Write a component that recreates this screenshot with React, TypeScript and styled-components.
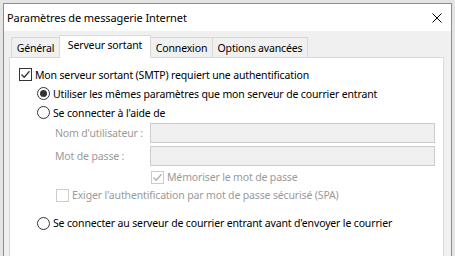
import React from "react";
import styled, { createGlobalStyle } from "styled-components";

const Global = createGlobalStyle`
  html, body { margin: 0; padding: 0; background: #e4e4e4; overflow: hidden; }
  body { width: 455px; height: 256px; font-family: "Noto Sans", "Segoe UI", sans-serif; }
  #root { height: 256px; }
`;

const Screen = styled.div`
  position: relative;
  height: 256px;
  padding: 3px 0 0 3px;
  box-sizing: border-box;
  overflow: hidden;
`;

const Dialog = styled.div`
  width: 449px;
  height: 270px;
  box-sizing: border-box;
  border: 1px solid #8d8d8d;
  background: #f0f0f0;
  display: flex;
  flex-direction: column;
`;

const TitleBar = styled.div`
  height: 27px;
  flex: none;
  background: #ffffff;
  display: flex;
  align-items: center;
  justify-content: space-between;
  padding: 0 9px 0 3px;
  font-size: 11px;
  letter-spacing: -0.1px;
  color: #000;
`;

const CloseIcon = styled.svg`
  width: 10px;
  height: 10px;
  display: block;
`;

const Body = styled.div`
  flex: 1;
  padding: 4px 7px 0 5px;
  display: flex;
  flex-direction: column;
  font-size: 10.5px;
  letter-spacing: -0.15px;
`;

const TabRow = styled.div`
  display: flex;
  align-items: flex-end;
  height: 23px;
  padding-left: 2px;
  margin-bottom: -1px;
  position: relative;
  z-index: 1;
`;

const Tab = styled.div<{ $w: number; $active?: boolean }>`
  width: ${(p) => p.$w}px;
  box-sizing: border-box;
  height: ${(p) => (p.$active ? 23 : 21)}px;
  margin-left: -1px;
  &:first-child { margin-left: 0; }
  border: 1px solid #d9d9d9;
  border-bottom: ${(p) => (p.$active ? "none" : "1px solid #d9d9d9")};
  background: ${(p) => (p.$active ? "#ffffff" : "#f0f0f0")};
  position: relative;
  z-index: ${(p) => (p.$active ? 2 : 1)};
  display: flex;
  align-items: ${(p) => (p.$active ? "flex-start" : "center")};
  justify-content: center;
  padding-top: ${(p) => (p.$active ? "2px" : "0")};
  color: #000;
  white-space: nowrap;
`;

const Panel = styled.div`
  width: 435px;
  flex: 1;
  box-sizing: border-box;
  background: #ffffff;
  border: 1px solid #d9d9d9;
  padding: 7px 0 0 9px;
  display: flex;
  flex-direction: column;
`;

const Row = styled.div<{ $indent?: number; $h?: number; $mt?: number }>`
  display: flex;
  align-items: center;
  gap: 3px;
  height: ${(p) => p.$h ?? 19}px;
  margin-left: ${(p) => p.$indent ?? 0}px;
  margin-top: ${(p) => p.$mt ?? 0}px;
  white-space: nowrap;
`;

const Label = styled.span<{ $disabled?: boolean }>`
  color: ${(p) => (p.$disabled ? "#9a9a9a" : "#000000")};
  white-space: nowrap;
`;

const Box = styled.span<{ $disabled?: boolean }>`
  width: 13px;
  height: 13px;
  box-sizing: border-box;
  flex: none;
  border: 1px solid ${(p) => (p.$disabled ? "#cccccc" : "#333333")};
  background: #ffffff;
  display: flex;
  align-items: center;
  justify-content: center;
`;

const Radio = styled.span<{ $checked?: boolean }>`
  width: 13px;
  height: 13px;
  box-sizing: border-box;
  flex: none;
  border: 1px solid #333333;
  border-radius: 50%;
  background: #ffffff;
  display: flex;
  align-items: center;
  justify-content: center;
  &::after {
    content: "";
    display: ${(p) => (p.$checked ? "block" : "none")};
    width: 7px;
    height: 7px;
    border-radius: 50%;
    background: #333333;
  }
`;

const Fields = styled.div`
  display: grid;
  grid-template-columns: 95px 285px;
  row-gap: 3px;
  margin-left: 36px;
  margin-top: 1px;
  align-items: center;
`;

const Input = styled.div`
  height: 20px;
  box-sizing: border-box;
  border: 1px solid #cccccc;
  background: #f0f0f0;
`;

const Check = ({ color }: { color: string }) => (
  <svg width="11" height="11" viewBox="0 0 11 11">
    <path d="M1.5 5.5 L4.2 8.3 L9.5 2.2" fill="none" stroke={color} strokeWidth="1.3" />
  </svg>
);

export default function App() {
  return (
    <>
      <Global />
      <Screen>
        <Dialog>
          <TitleBar>
            <span>Paramètres de messagerie Internet</span>
            <CloseIcon viewBox="0 0 10 10">
              <path d="M0.5 0.5 L9.5 9.5 M9.5 0.5 L0.5 9.5" stroke="#000" strokeWidth="1" />
            </CloseIcon>
          </TitleBar>
          <Body>
            <TabRow>
              <Tab $w={49}>Général</Tab>
              <Tab $w={92} $active>Serveur sortant</Tab>
              <Tab $w={63}>Connexion</Tab>
              <Tab $w={96}>Options avancées</Tab>
            </TabRow>
            <Panel>
              <Row>
                <Box><Check color="#333" /></Box>
                <Label>Mon serveur sortant (SMTP) requiert une authentification</Label>
              </Row>
              <Row $indent={18}>
                <Radio $checked />
                <Label>Utiliser les mêmes paramètres que mon serveur de courrier entrant</Label>
              </Row>
              <Row $indent={18}>
                <Radio />
                <Label>Se connecter à l'aide de</Label>
              </Row>
              <Fields>
                <Label $disabled>Nom d'utilisateur :</Label>
                <Input />
                <Label $disabled>Mot de passe :</Label>
                <Input />
              </Fields>
              <Row $indent={132} $h={18} $mt={2}>
                <Box $disabled><Check color="#b0b0b0" /></Box>
                <Label $disabled>Mémoriser le mot de passe</Label>
              </Row>
              <Row $indent={37} $h={18}>
                <Box $disabled />
                <Label $disabled>Exiger l'authentification par mot de passe sécurisé (SPA)</Label>
              </Row>
              <Row $indent={18} $h={18} $mt={10}>
                <Radio />
                <Label>Se connecter au serveur de courrier entrant avant d'envoyer le courrier</Label>
              </Row>
            </Panel>
          </Body>
        </Dialog>
      </Screen>
    </>
  );
}
